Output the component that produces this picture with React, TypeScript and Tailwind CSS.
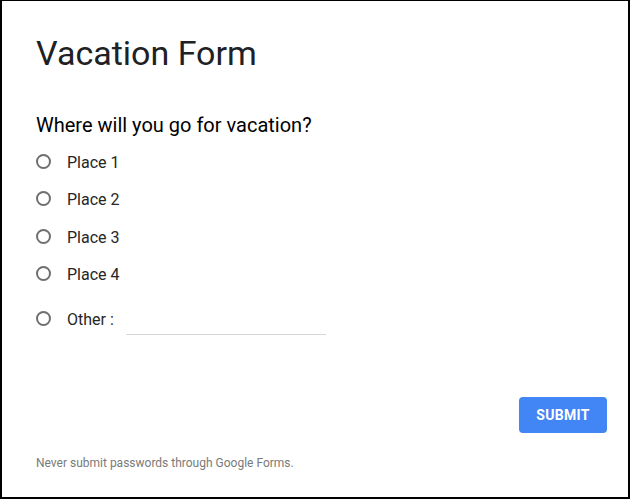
import { useState } from 'react'

const places = ['Place 1', 'Place 2', 'Place 3', 'Place 4']

function Radio({ checked }: { checked: boolean }) {
    return (
        <span className="mb-[3px] flex h-[15px] w-[15px] shrink-0 items-center justify-center rounded-full border-2 border-[#6f6f6f]">
            {checked && <span className="h-[7px] w-[7px] rounded-full bg-[#6f6f6f]" />}
        </span>
    )
}

export default function App() {
    const [choice, setChoice] = useState('')
    const [other, setOther] = useState('')

    return (
        <div className="h-[499px] w-[630px] border-x-2 border-b-2 border-t border-black bg-white font-['Roboto',sans-serif] text-[#212121]">
            <div className="flex h-full flex-col pl-[34px] pr-[21px]">
                <h1 className="mt-[32px] text-[34px] leading-[40px] font-normal text-[#202124]">Vacation Form</h1>

                <h2 className="mt-[39px] text-[20px] leading-[26px] text-black">Where will you go for vacation?</h2>

                <div className="mt-[6px] flex flex-col">
                    {places.map((p) => (
                        <label key={p} className="flex h-[37.5px] cursor-pointer items-center gap-[16px]" onClick={() => setChoice(p)}>
                            <Radio checked={choice === p} />
                            <span className="text-[16px] text-[#262626]">{p}</span>
                        </label>
                    ))}
                    <div className="mt-[8px] flex h-[36px] items-center gap-[16px]" onClick={() => setChoice('other')}>
                        <Radio checked={choice === 'other'} />
                        <span className="text-[16px] text-[#262626]">Other :</span>
                        <input
                            value={other}
                            onChange={(e) => setOther(e.target.value)}
                            className="mt-[4px] ml-[-4px] h-[26px] w-[200px] border-b border-[#d6d6d6] text-[15px] outline-none"
                        />
                    </div>
                </div>

                <div className="mt-[59px] flex justify-end">
                    <button className="h-[36px] w-[88px] rounded-[4px] bg-[#4285f4] text-[14px] font-bold tracking-[0.3px] text-white">
                        SUBMIT
                    </button>
                </div>

                <p className="mt-[21px] text-[12px] text-[#7a7a7a]">Never submit passwords through Google Forms.</p>
            </div>
        </div>
    )
}
